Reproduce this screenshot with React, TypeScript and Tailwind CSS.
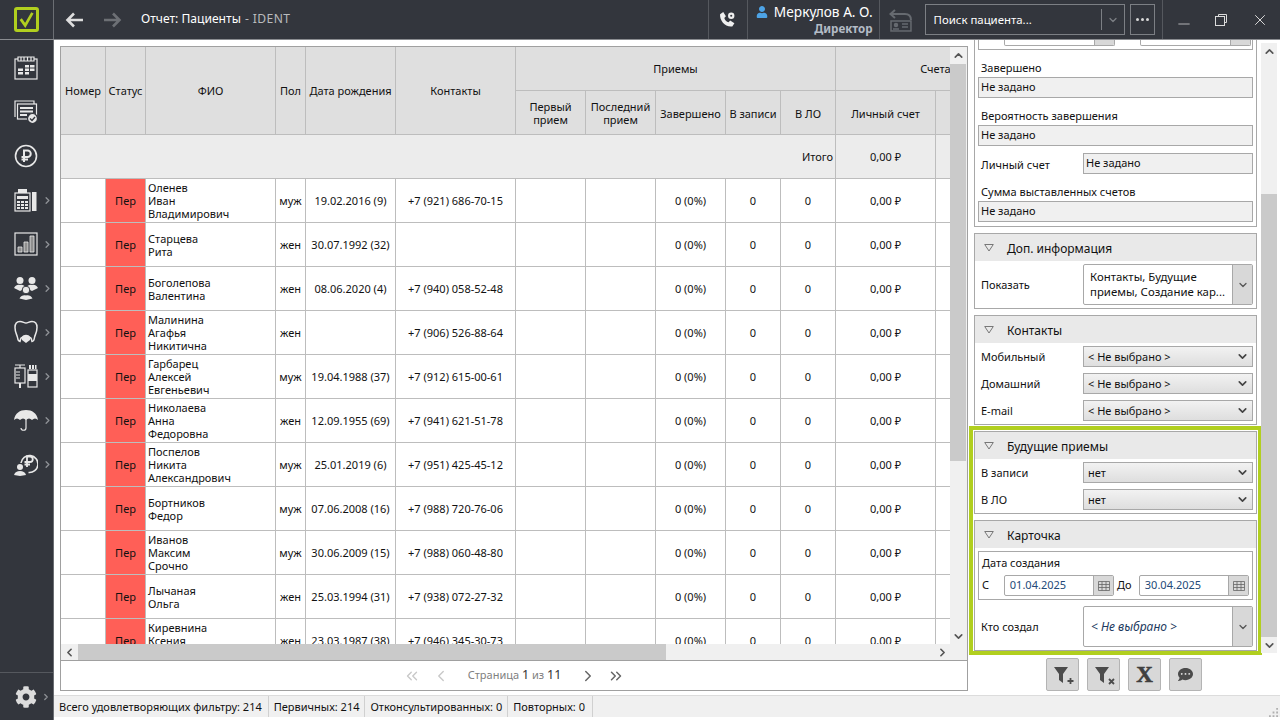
import type { ReactNode } from "react";
import { ChevronDown, ChevronLeft, ChevronRight, ChevronUp, ChevronsLeft, ChevronsRight, Minus, X } from "lucide-react";
import { FaCog, FaCommentDots, FaUser } from "react-icons/fa";

const COLS = "grid-cols-[45px_40px_130px_30px_90px_120px_70px_70px_70px_55px_55px_100px_100px]";
const CELL = "flex items-center justify-center border-r border-b border-[#bdbdbd] pt-[1px]";

const patients = [
  { name: ["Оленев", "Иван", "Владимирович"], sex: "муж", birth: "19.02.2016 (9)", phone: "+7 (921) 686-70-15" },
  { name: ["Старцева", "Рита"], sex: "жен", birth: "30.07.1992 (32)", phone: "" },
  { name: ["Боголепова", "Валентина"], sex: "жен", birth: "08.06.2020 (4)", phone: "+7 (940) 058-52-48" },
  { name: ["Малинина", "Агафья", "Никитична"], sex: "жен", birth: "", phone: "+7 (906) 526-88-64" },
  { name: ["Гарбарец", "Алексей", "Евгеньевич"], sex: "муж", birth: "19.04.1988 (37)", phone: "+7 (912) 615-00-61" },
  { name: ["Николаева", "Анна", "Федоровна"], sex: "жен", birth: "12.09.1955 (69)", phone: "+7 (941) 621-51-78" },
  { name: ["Поспелов", "Никита", "Александрович"], sex: "муж", birth: "25.01.2019 (6)", phone: "+7 (951) 425-45-12" },
  { name: ["Бортников", "Федор"], sex: "муж", birth: "07.06.2008 (16)", phone: "+7 (988) 720-76-06" },
  { name: ["Иванов", "Максим", "Срочно"], sex: "муж", birth: "30.06.2009 (15)", phone: "+7 (988) 060-48-80" },
  { name: ["Лычаная", "Ольга"], sex: "жен", birth: "25.03.1994 (31)", phone: "+7 (938) 072-27-32" },
  { name: ["Киревнина", "Ксения", "Сергеевна"], sex: "жен", birth: "23.03.1987 (38)", phone: "+7 (946) 345-30-73" },
];

const Svg = ({ children }: { children: ReactNode }) => (
  <svg viewBox="0 0 24 24" className="h-6 w-6" fill="none" stroke="#e8e8e8" strokeWidth="1.2">
    {children}
  </svg>
);

const navIcons: { icon: ReactNode; arrow?: boolean }[] = [
  {
    icon: (
      <Svg>
        <rect x="1" y="3" width="22" height="20" />
        <path d="M4 1h16v4H4z" fill="#33363d" />
        <path d="M7 1v4M10 1v4M13.500 1v4M17 1v4" />
        <path d="M11 9h4v2.500h-4zM16 9h4.500v2.500H16zM4 12.500h5V15H4zM11 12.500h4V15h-4zM16 12.500h4.500V15H16zM4 16h5v2.500H4zM11 16h4v2.500h-4z" fill="#e8e8e8" stroke="none" />
      </Svg>
    ),
  },
  {
    icon: (
      <Svg>
        <path d="M1 17V1h19v3" />
        <rect x="3.500" y="4" width="19" height="15" fill="#33363d" />
        <path d="M6 7h13v2H6zM6 10.500h13v2H6zM6 14h7v2H6z" fill="#e8e8e8" stroke="none" />
        <circle cx="18.500" cy="18.500" r="5" fill="#e8e8e8" stroke="#33363d" />
        <path d="M16 18.500l2 2 3-3.500" stroke="#33363d" strokeWidth="1.400" />
      </Svg>
    ),
  },
  {
    icon: (
      <Svg>
        <circle cx="12" cy="12" r="10.500" strokeWidth="1.600" />
        <path d="M10 18V6.500h3.500a3.200 3.200 0 0 1 0 6.500H7.500M7.500 15.500H14" strokeWidth="2" />
      </Svg>
    ),
  },
  {
    arrow: true,
    icon: (
      <Svg>
        <rect x="1" y="5" width="15" height="18" />
        <path d="M4 1h9v4H4z" fill="#e8e8e8" stroke="none" />
        <rect x="18" y="4" width="4.500" height="19" fill="#e8e8e8" stroke="none" />
        <path d="M3 8h11v3H3z" fill="#e8e8e8" stroke="none" />
        <path d="M3 13h3v2H3zM7 13h3v2H7zM11 13h3v2h-3zM3 16h3v2H3zM7 16h3v2H7zM11 16h3v2h-3zM3 19h3v2H3zM7 19h3v2H7zM11 19h3v2h-3z" fill="#e8e8e8" stroke="none" />
      </Svg>
    ),
  },
  {
    arrow: true,
    icon: (
      <Svg>
        <rect x="1" y="1" width="22" height="22" />
        <path d="M4 15h4v5H4zM10 10h4v10h-4zM16 4h4v16h-4z" fill="#8f8f8f" stroke="#e8e8e8" strokeWidth="0.800" />
      </Svg>
    ),
  },
  {
    arrow: true,
    icon: (
      <svg viewBox="0 0 24 24" className="h-6 w-6" fill="#e8e8e8">
        <circle cx="6" cy="4.500" r="3.500" />
        <circle cx="18" cy="4.500" r="3.500" />
        <path d="M0 12c1.500-3 4-3.500 6-3 2-.5 4.500 0 6 3l-6 3zM12 12c1.500-3 4-3.500 6-3 2-.5 4.500 0 6 3l-6 3z" />
        <circle cx="12" cy="14" r="3.800" stroke="#33363d" />
        <path d="M5.500 22.500c1.500-3 4-3.500 6.500-3 2.500-.5 5 0 6.500 3L12 24z" />
      </svg>
    ),
  },
  {
    arrow: true,
    icon: (
      <Svg>
        <path d="M6 1.500c3 0 4 1.500 6 1.500s3-1.500 6-1.500c3.500 0 5 3 5 6 0 5-2 7-2.500 10-.3 2-1 4-2.500 4-.5-3-1-5-6-5s-5.500 2-6 5c-1.500 0-2.200-2-2.500-4C3 14.500 1 12.500 1 7.500c0-3 1.500-6 5-6z" strokeWidth="1.500" />
        <path d="M8 17c1-3 7-3 8 0v3l-4 3-4-3zM12 16v7" fill="#e8e8e8" stroke="none" />
      </Svg>
    ),
  },
  {
    arrow: true,
    icon: (
      <Svg>
        <rect x="1" y="4" width="10" height="15" />
        <path d="M1 1h10M6 1v3M2 8h4M2 11h4M2 14h4" />
        <path d="M5 19h2v5H5z" fill="#e8e8e8" stroke="none" />
        <rect x="14" y="6" width="9" height="17" />
        <path d="M15 1h2v4h-2zM18 1h2v4h-2zM21 1h1.500v4H21zM14 10h9v7h-9z" fill="#e8e8e8" stroke="none" />
      </Svg>
    ),
  },
  {
    arrow: true,
    icon: (
      <svg viewBox="0 0 24 24" className="h-6 w-6" fill="none">
        <path d="M0 12C1 5 6 2 12 2s11 3 12 10c-2-2-4-2-6 0-2-2-4-2-6 0-2-2-4-2-6 0-2-2-4-2-6 0z" fill="#e8e8e8" />
        <path d="M12 10v10c0 3-5 3-5 0" stroke="#e8e8e8" strokeWidth="1.200" />
      </svg>
    ),
  },
  {
    arrow: true,
    icon: (
      <svg viewBox="0 0 24 24" className="h-6 w-6" fill="none" stroke="#e8e8e8">
        <path d="M7 11a8.500 8.500 0 1 1 7.500 9.500" strokeWidth="1.600" />
        <path d="M13 15V4.500h3a2.700 2.700 0 0 1 0 5.500h-5.500M10.500 12.500H16" strokeWidth="1.800" />
        <circle cx="6" cy="15" r="3" fill="#e8e8e8" stroke="none" />
        <path d="M0 23c1-3 3-4 6-4s5 1 6 4l-6 1z" fill="#e8e8e8" stroke="none" />
      </svg>
    ),
  },
];

const Sidebar = () => (
  <div className="flex h-full w-[54px] shrink-0 flex-col border-r border-[#6b6e73] bg-[#33363d]">
    <div className="flex flex-1 flex-col gap-[20px] pt-[16px]">
      {navIcons.map((item, index) => (
        <div key={index} className="relative flex h-[24px] w-[53px] items-center pl-[14px]">
          {item.icon}
          {item.arrow && <ChevronRight className="absolute left-[42px] h-[11px] w-[11px] text-[#8d9095]" strokeWidth={3} />}
        </div>
      ))}
    </div>
    <div className="relative flex h-[48px] items-center border-t border-[#55585e] pl-[15px]">
      <FaCog className="h-[22px] w-[22px] text-[#dcdcdc]" />
      <ChevronRight className="absolute left-[41px] h-[10px] w-[10px] text-[#8d9095]" strokeWidth={3} />
    </div>
  </div>
);

const TopBar = () => (
  <div className="flex h-[40px] shrink-0 items-center border-b border-[#8a8c90] bg-[#33363d] text-white">
    <div className="flex h-full w-[54px] shrink-0 items-center justify-center border-r border-[#6b6e73]">
      <div className="flex h-[25px] w-[25px] items-center justify-center rounded-[3px] border-[3px] border-[#b1cf1f]">
        <svg viewBox="0 0 20 20" className="h-[18px] w-[18px]" fill="none" stroke="#b1cf1f" strokeWidth="3">
          <path d="M3 9l5 7 8-14" />
        </svg>
      </div>
    </div>
    <svg viewBox="0 0 18 16" className="ml-[11px] h-[16px] w-[18px]" fill="none" stroke="#dedede" strokeWidth="2.600">
      <path d="M9 1.500L2.500 8 9 14.500M2.500 8H18" />
    </svg>
    <svg viewBox="0 0 18 16" className="ml-[21px] h-[16px] w-[18px]" fill="none" stroke="#6d7075" strokeWidth="2.600">
      <path d="M9 1.500L15.500 8 9 14.500M15.500 8H0" />
    </svg>
    <div className="ml-[19px] w-[568px] text-[12.100px] whitespace-nowrap">
      Отчет: Пациенты <span className="ml-[1px] tracking-[0.4px] text-[#b9bbbe]">- IDENT</span>
    </div>
    <div className="relative flex h-full w-[40px] items-center justify-center border-x border-[#55585e]">
      <svg viewBox="0 0 16 16" className="h-[17px] w-[17px]" fill="#efefef">
        <path d="M1 3l3-2 2.500 4-1.500 1.500c.5 2 2 3.500 4 4L10.500 9l4 2.500-2 3C6 15.500.5 9 1 3z" />
        <circle cx="11.500" cy="4.500" r="3" />
        <circle cx="11.500" cy="4.500" r="1" fill="#33363d" />
      </svg>
    </div>
    <div className="flex h-full w-[132px] flex-col items-end border-r border-[#55585e] pt-[2px] pr-[6px]">
      <div className="flex items-center gap-[6px] text-[13.700px] leading-[19px] whitespace-nowrap">
        <FaUser className="h-[12px] w-[12px] text-[#4da3e6]" /> Меркулов А. О.
      </div>
      <div className="text-[11.600px] leading-[16px] font-bold text-[#b4bcc6]">Директор</div>
    </div>
    <svg viewBox="0 0 24 24" className="ml-[9px] h-[24px] w-[24px]" fill="none" stroke="#666a70" strokeWidth="1.500">
      <path d="M6 2L1.500 6 6 10M1.500 6H16c4 0 6 2 6 6" strokeWidth="2" />
      <rect x="2" y="13" width="20" height="10" fill="#33363d" />
      <circle cx="7" cy="17" r="1.500" fill="#666a70" />
      <path d="M4 21h6M13 16h6M13 19h6" />
    </svg>
    <div className="ml-[12px] flex h-[31px] w-[201px] items-center border border-[#7c7f84] pl-[8px] text-[11.400px]">
      <span className="flex-1">Поиск пациента...</span>
      <div className="flex h-[21px] w-[23px] items-center justify-center border-l border-[#7c7f84]">
        <ChevronDown className="h-[12px] w-[12px] text-[#7c7f84]" strokeWidth={2.500} />
      </div>
    </div>
    <div className="ml-[5px] flex h-[31px] w-[25px] items-center justify-center gap-[2px] border border-[#7c7f84]">
      <div className="h-[3px] w-[3px] rounded-full bg-[#d8d8d8]" />
      <div className="h-[3px] w-[3px] rounded-full bg-[#d8d8d8]" />
      <div className="h-[3px] w-[3px] rounded-full bg-[#d8d8d8]" />
    </div>
    <div className="ml-[7px] flex h-full w-[118px] items-center border-l border-[#55585e] text-[#dcdcdc]">
      <Minus className="ml-[12px] mt-[8px] h-[18px] w-[18px]" strokeWidth={1} />
      <svg viewBox="0 0 12 12" className="ml-[22px] h-[12px] w-[12px]" fill="none" stroke="#dcdcdc">
        <path d="M3.500 2.500V.5h8v8h-2" />
        <rect x="0.500" y="2.500" width="9" height="9" />
      </svg>
      <X className="ml-[24px] h-[18px] w-[18px]" strokeWidth={1.300} />
    </div>
  </div>
);

const PatientTable = () => (
  <div className="min-w-0 flex-1 overflow-hidden">
    <div className="w-[975px] text-[11px] text-[#111]">
      <div className={`grid ${COLS} grid-rows-[44px_44px] bg-[#dfdfdf]`}>
        {["Номер", "Статус", "ФИО", "Пол", "Дата рождения", "Контакты"].map((title) => (
          <div key={title} className={`row-span-2 whitespace-nowrap ${CELL}`}>
            {title}
          </div>
        ))}
        <div className={`col-span-5 ${CELL}`}>Приемы</div>
        <div className={`col-span-2 ${CELL}`}>Счета</div>
        {["Первый прием", "Последний прием", "Завершено", "В записи", "В ЛО", "Личный счет"].map((title) => (
          <div key={title} className={`text-center leading-[13px] ${CELL}`}>
            {title}
          </div>
        ))}
        <div className={`pl-[8px] ${CELL}`}>Выставленные</div>
      </div>
      <div className={`grid ${COLS} h-[44px] bg-[#ececec]`}>
        <div className={`col-span-11 !justify-end pr-[2px] ${CELL}`}>Итого</div>
        <div className={CELL}>0,00 ₽</div>
        <div className={CELL} />
      </div>
      {patients.map((patient) => (
        <div key={patient.name[0]} className={`grid ${COLS} h-[44px]`}>
          <div className={CELL} />
          <div className={`bg-[#ff5f57] ${CELL}`}>Пер</div>
          <div className="flex flex-col justify-center border-r border-b border-[#bdbdbd] pl-[2px] leading-[13px]">
            {patient.name.map((part) => (
              <div key={part}>{part}</div>
            ))}
          </div>
          <div className={CELL}>{patient.sex}</div>
          <div className={CELL}>{patient.birth}</div>
          <div className={CELL}>{patient.phone}</div>
          <div className={CELL} />
          <div className={CELL} />
          <div className={CELL}>0 (0%)</div>
          <div className={CELL}>0</div>
          <div className={CELL}>0</div>
          <div className={CELL}>0,00 ₽</div>
          <div className={CELL} />
        </div>
      ))}
    </div>
  </div>
);

const VerticalBar = ({ thumb, arrowBottom, width }: { thumb: string; arrowBottom: string; width: string }) => (
  <div className={`relative h-full shrink-0 bg-[#f0f0f0] ${width}`}>
    <ChevronUp className="absolute top-[2px] left-[2px] h-[13px] w-[13px] text-[#555]" strokeWidth={3} />
    <div className={`absolute left-0 w-[16px] bg-[#cacaca] ${thumb}`} />
    <ChevronDown className={`absolute left-[2px] h-[13px] w-[13px] text-[#555] ${arrowBottom}`} strokeWidth={3} />
  </div>
);

const TablePanel = () => (
  <div className="mt-[6px] ml-[6px] flex h-[645px] w-[908px] shrink-0 flex-col border border-[#a0a0a0]">
    <div className="flex min-h-0 flex-1">
      <PatientTable />
      <VerticalBar thumb="top-[17px] h-[397px]" arrowBottom="top-[583px]" width="w-[17px]" />
    </div>
    <div className="flex h-[17px] shrink-0 items-center border-b border-[#a0a0a0] bg-[#f0f0f0]">
      <ChevronLeft className="ml-[2px] h-[13px] w-[13px] text-[#555]" strokeWidth={3} />
      <div className="ml-[2px] h-full w-[588px] bg-[#cacaca]" />
      <ChevronRight className="mr-[18px] ml-auto h-[13px] w-[13px] text-[#555]" strokeWidth={3} />
    </div>
    <div className="flex h-[29px] shrink-0 items-center justify-center text-[11px] text-[#808080]">
      <ChevronsLeft className="h-[18px] w-[18px] text-[#c8c8c8]" strokeWidth={1.800} />
      <ChevronLeft className="ml-[11px] h-[18px] w-[18px] text-[#c8c8c8]" strokeWidth={1.800} />
      <span className="ml-[18px] whitespace-nowrap">
        Страница <span className="text-[12.500px] text-[#333]">1</span> из <span className="text-[12.500px] text-[#333]">11</span>
      </span>
      <ChevronRight className="ml-[18px] h-[18px] w-[18px] text-[#666]" strokeWidth={2} />
      <ChevronsRight className="ml-[10px] h-[18px] w-[18px] text-[#666]" strokeWidth={2} />
    </div>
  </div>
);

const Select = ({ value }: { value: string }) => (
  <div className="flex h-[21px] w-[170px] shrink-0 items-center border border-[#a8a8a8] bg-gradient-to-b from-[#f2f2f2] to-[#dedede] pr-[3px] pl-[4px]">
    <span className="flex-1 pt-[1px]">{value}</span>
    <ChevronDown className="h-[13px] w-[13px] text-[#444]" strokeWidth={3} />
  </div>
);

const Field = ({ value, width = "w-full" }: { value: string; width?: string }) => (
  <div className={`flex h-[21px] items-center border border-[#a8a8a8] bg-[#f0f0f0] pl-[2px] ${width}`}>{value}</div>
);

const FieldRow = ({ label, children }: { label: string; children: ReactNode }) => (
  <div className="flex items-center">
    <div className="w-[105px] shrink-0 pt-[3px] pl-[3px]">{label}</div>
    {children}
  </div>
);

const Section = ({ title, children }: { title: string; children: ReactNode }) => (
  <div className="w-[283px] border border-[#a8a8a8] bg-white">
    <div className="flex h-[27px] items-center bg-[#e9e9e9] pl-[9px] text-[12px]">
      <svg viewBox="0 0 10 8" className="h-[8px] w-[10px]" fill="none" stroke="#777">
        <path d="M.7.5h8.600L5 7z" />
      </svg>
      <span className="ml-[13px] pt-[2px]">{title}</span>
    </div>
    {children}
  </div>
);

const Combo = ({ children, height }: { children: ReactNode; height: string }) => (
  <div className={`flex w-[170px] shrink-0 overflow-hidden rounded-[2px] border border-[#a8a8a8] ${height}`}>
    <div className="flex flex-1 items-center pl-[6px]">{children}</div>
    <div className="flex w-[20px] items-center justify-center border-l border-[#a8a8a8] bg-[#d8d8d8]">
      <ChevronDown className="h-[12px] w-[12px] text-[#555]" strokeWidth={2.500} />
    </div>
  </div>
);

const DateInput = ({ value }: { value: string }) => (
  <div className="flex h-[21px] w-[111px] overflow-hidden rounded-[2px] border border-[#a8a8a8]">
    <div className="flex flex-1 items-center pl-[5px] text-[#244a78]">{value}</div>
    <div className="flex w-[20px] items-center justify-center border-l border-[#a8a8a8] bg-[#d8d8d8]">
      <svg viewBox="0 0 12 10" className="h-[10px] w-[12px]" fill="none" stroke="#666" strokeWidth="0.800">
        <path d="M.5.5h11v9H.5zM.5 3.500h11M.5 6.500h11M4 .5v9M8 .5v9" />
      </svg>
    </div>
  </div>
);

const DateStub = () => (
  <div className="flex h-[6px] w-[111px] justify-end overflow-hidden rounded-b-[2px] border-x border-b border-[#a8a8a8]">
    <div className="w-[20px] border-l border-[#a8a8a8] bg-[#d8d8d8]" />
  </div>
);

const FunnelIcon = ({ mark }: { mark: string }) => (
  <svg viewBox="0 0 20 18" className="mt-[2px] ml-[3px] h-[18px] w-[20px]" fill="#4b4b4b">
    <path d="M0 0h14L9 7v9L5 13V7z" />
    <path d={mark} fill="none" stroke="#4b4b4b" strokeWidth="1.800" />
  </svg>
);

const FilterPanel = () => (
  <div className="flex h-[655px] w-[292px] shrink-0 flex-col text-[11px] text-[#111]">
    <div className="flex h-[617px] w-[293px] flex-col overflow-hidden pl-[5px]">
      <div className="flex h-[187px] w-[283px] shrink-0 flex-col border-x border-b border-[#a8a8a8] px-[3px]">
        <div className="flex h-[10px] shrink-0 gap-[25px] border-x border-b border-[#a8a8a8] pl-[25px]">
          <DateStub />
          <DateStub />
        </div>
        <div className="mt-[11px] pl-[3px] leading-[14px]">Завершено</div>
        <div className="mt-[2px]">
          <Field value="Не задано" />
        </div>
        <div className="mt-[11px] pl-[3px] leading-[14px]">Вероятность завершения</div>
        <div className="mt-[2px]">
          <Field value="Не задано" />
        </div>
        <div className="mt-[7px]">
          <FieldRow label="Личный счет">
            <Field value="Не задано" width="w-[170px]" />
          </FieldRow>
        </div>
        <div className="mt-[11px] pl-[3px] leading-[14px]">Сумма выставленных счетов</div>
        <div className="mt-[2px]">
          <Field value="Не задано" />
        </div>
      </div>
      <div className="mt-[6px]">
        <Section title="Доп. информация">
          <div className="px-[6px] py-[3px]">
            <div className="flex items-center">
              <div className="w-[102px] shrink-0 pt-[1px]">Показать</div>
              <Combo height="h-[41px]">
                <span className="-mt-[2px] text-[11.400px] leading-[15px]">Контакты, Будущие приемы, Создание кар...</span>
              </Combo>
            </div>
          </div>
        </Section>
      </div>
      <div className="mt-[6px]">
        <Section title="Контакты">
          <div className="flex flex-col gap-[6px] px-[6px] pt-[3px] pb-[3px]">
            {["Мобильный", "Домашний", "E-mail"].map((label) => (
              <div key={label} className="flex items-center">
                <div className="w-[102px] shrink-0 pt-[1px]">{label}</div>
                <Select value="< Не выбрано >" />
              </div>
            ))}
          </div>
        </Section>
      </div>
      <div className="mt-[1px] -ml-[5px] w-[293px] shrink-0 border-[4px] border-[#b1cf1f] pt-[1px] pl-[1px]">
        <Section title="Будущие приемы">
          <div className="flex flex-col gap-[6px] px-[6px] py-[3px]">
            {["В записи", "В ЛО"].map((label) => (
              <div key={label} className="flex items-center">
                <div className="w-[102px] shrink-0 pt-[1px]">{label}</div>
                <Select value="нет" />
              </div>
            ))}
          </div>
        </Section>
        <div className="mt-[6px]">
          <Section title="Карточка">
            <div className="px-[3px] pt-[3px] pb-[3px]">
              <div className="border border-[#a8a8a8] px-[3px] pb-[3px]">
                <div className="pt-[2px] pb-[1px] leading-[17px]">Дата создания</div>
                <div className="mt-[3px] flex items-center">
                  <div className="w-[22px]">С</div>
                  <DateInput value="01.04.2025" />
                  <div className="w-[25px] pl-[3px]">До</div>
                  <DateInput value="30.04.2025" />
                </div>
              </div>
              <div className="mt-[6px] flex items-center pl-[3px]">
                <div className="w-[102px] shrink-0 pt-[1px]">Кто создал</div>
                <Combo height="h-[41px]">
                  <span className="pt-[1px] pl-[1px] text-[12px] text-[#1d3a60] italic">{"< Не выбрано >"}</span>
                </Combo>
              </div>
            </div>
          </Section>
        </div>
      </div>
    </div>
    <div className="mt-[1px] ml-[77px] flex gap-[8px]">
      <ToolButton>
        <FunnelIcon mark="M13.500 14h6M16.500 11v6" />
      </ToolButton>
      <ToolButton>
        <FunnelIcon mark="M14 12l5 5M19 12l-5 5" />
      </ToolButton>
      <ToolButton>
        <span className="font-['Liberation_Serif',serif] text-[23px] leading-[23px] font-bold text-[#3f3f3f] [-webkit-text-stroke:0.6px_#3f3f3f]">X</span>
      </ToolButton>
      <ToolButton>
        <FaCommentDots className="h-[15px] w-[15px] text-[#4b4b4b]" />
      </ToolButton>
    </div>
  </div>
);

const ToolButton = ({ children }: { children: ReactNode }) => (
  <div className="flex h-[33px] w-[33px] items-center justify-center rounded-[2px] border border-[#b4b4b4] bg-[#d8d8d8]">
    {children}
  </div>
);

const StatusBar = () => (
  <div className="relative flex h-[25px] shrink-0 border-t border-[#dcdcdc] bg-white text-[11px] text-[#111]">
    <div className="flex h-[21px] flex-1 items-center bg-[#f0f0f0] pl-[5px]">
      <span className="border-r border-[#d0d0d0] pr-[6px] leading-[21px]">Всего удовлетворяющих фильтру: 214</span>
      <span className="border-r border-[#d0d0d0] px-[5px] leading-[21px]">Первичных: 214</span>
      <span className="border-r border-[#d0d0d0] px-[5px] leading-[21px]">Отконсультированных: 0</span>
      <span className="border-r border-[#d0d0d0] px-[5px] pr-[7px] leading-[21px]">Повторных: 0</span>
    </div>
    <svg viewBox="0 0 10 10" className="absolute top-[12px] right-[2px] h-[9px] w-[9px]" fill="#b0b0b0">
      <path d="M8 0h2v2H8zM4 4h2v2H4zM8 4h2v2H8zM0 8h2v2H0zM4 8h2v2H4zM8 8h2v2H8z" />
    </svg>
  </div>
);

export default function App() {
  return (
    <div className="flex h-[720px] w-[1280px] flex-col overflow-hidden bg-white font-['Noto_Sans','Liberation_Sans',sans-serif]">
      <TopBar />
      <div className="flex min-h-0 flex-1">
        <Sidebar />
        <div className="flex min-w-0 flex-1 flex-col">
          <div className="flex h-[655px] shrink-0">
            <TablePanel />
            <div className="w-[1px] shrink-0" />
            <FilterPanel />
            <div className="mt-[3px] h-[610px]">
              <VerticalBar thumb="top-[151px] h-[443px]" arrowBottom="top-[596px]" width="w-[16px]" />
            </div>
          </div>
          <StatusBar />
        </div>
      </div>
    </div>
  );
}
